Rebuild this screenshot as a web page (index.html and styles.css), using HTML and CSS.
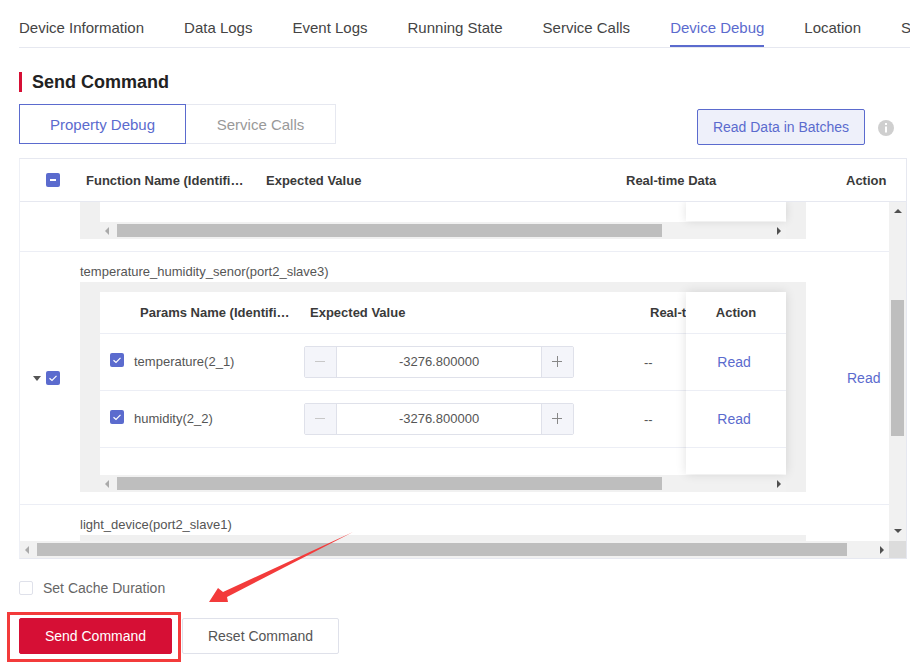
FILE: index.html
```html
<!DOCTYPE html>
<html lang="en">
<head>
    <meta charset="UTF-8">
    <title>Device Debug</title>
    <link rel="stylesheet" href="styles.css">
</head>
<body>

<div class="page">
    <div class="tabs">
        <a class="tab">Device Information</a>
        <a class="tab">Data Logs</a>
        <a class="tab">Event Logs</a>
        <a class="tab">Running State</a>
        <a class="tab">Service Calls</a>
        <a class="tab active">Device Debug</a>
        <a class="tab">Location</a>
        <a class="tab">Settings</a>
    </div>

    <h2 class="section-title">Send Command</h2>

    <div class="toolbar">
        <div class="switch">
            <span class="switch-item selected">Property Debug</span>
            <span class="switch-item">Service Calls</span>
        </div>
        <button class="batch-btn">Read Data in Batches</button>
        <svg class="info-icon" width="16" height="16" viewBox="0 0 16 16">
            <circle cx="8" cy="8" r="8" fill="#cfcfcf"/>
            <rect x="7" y="3" width="2" height="2" fill="#fff"/>
            <rect x="7" y="6.5" width="2" height="6" fill="#fff"/>
        </svg>
    </div>

    <div class="table">
        <div class="table-head">
            <div class="col-left"><span class="checkbox partial"></span></div>
            <div class="head-name">Function Name (Identifi…</div>
            <div class="head-value">Expected Value</div>
            <div class="head-data">Real-time Data</div>
            <div class="head-action">Action</div>
        </div>

        <div class="table-middle">
            <div class="table-body">
                <div class="row">
                    <div class="col-left"></div>
                    <div class="sub-block no-top">
                        <div class="sub-table">
                            <div class="sub-scroll clipped"></div>
                            <div class="sub-fixed clipped"></div>
                        </div>
                        <div class="hbar inner">
                            <span class="arrow left"></span>
                            <span class="hbar-thumb inner-thumb"></span>
                            <span class="arrow right"></span>
                        </div>
                    </div>
                </div>

                <div class="row">
                    <div class="col-left">
                        <span class="caret"></span>
                        <span class="checkbox checked">
                            <svg width="14" height="14" viewBox="0 0 14 14"><path d="M3.5 7.2 6 9.5 10.5 4.8" fill="none" stroke="#fff" stroke-width="1.2"/></svg>
                        </span>
                    </div>
                    <div class="col-device">
                        <div class="device-name">temperature_humidity_senor(port2_slave3)</div>
                        <div class="sub-block">
                            <div class="sub-table">
                                <div class="sub-scroll">
                                    <div class="sub-row sub-head">
                                        <div class="sub-name head-pad">Params Name (Identifi…</div>
                                        <div class="sub-value head-value-pad">Expected Value</div>
                                        <div class="sub-data">Real-time Data</div>
                                    </div>
                                    <div class="sub-row">
                                        <div class="sub-name param">
                                            <span class="checkbox checked">
                                                <svg width="14" height="14" viewBox="0 0 14 14"><path d="M3.5 7.2 6 9.5 10.5 4.8" fill="none" stroke="#fff" stroke-width="1.2"/></svg>
                                            </span>
                                            temperature(2_1)
                                        </div>
                                        <div class="sub-value">
                                            <div class="stepper">
                                                <span class="step minus"></span>
                                                <span class="step-input">-3276.800000</span>
                                                <span class="step plus"></span>
                                            </div>
                                        </div>
                                        <div class="sub-data dash">--</div>
                                    </div>
                                    <div class="sub-row">
                                        <div class="sub-name param">
                                            <span class="checkbox checked">
                                                <svg width="14" height="14" viewBox="0 0 14 14"><path d="M3.5 7.2 6 9.5 10.5 4.8" fill="none" stroke="#fff" stroke-width="1.2"/></svg>
                                            </span>
                                            humidity(2_2)
                                        </div>
                                        <div class="sub-value">
                                            <div class="stepper">
                                                <span class="step minus"></span>
                                                <span class="step-input">-3276.800000</span>
                                                <span class="step plus"></span>
                                            </div>
                                        </div>
                                        <div class="sub-data dash">--</div>
                                    </div>
                                </div>
                                <div class="sub-fixed">
                                    <div class="fixed-cell fixed-head">Action</div>
                                    <div class="fixed-cell"><a class="link">Read</a></div>
                                    <div class="fixed-cell"><a class="link">Read</a></div>
                                </div>
                            </div>
                            <div class="hbar inner">
                                <span class="arrow left"></span>
                                <span class="hbar-thumb inner-thumb"></span>
                                <span class="arrow right"></span>
                            </div>
                        </div>
                    </div>
                    <div class="col-action"><a class="link">Read</a></div>
                </div>

                <div class="row">
                    <div class="col-left"></div>
                    <div class="col-device">
                        <div class="device-name">light_device(port2_slave1)</div>
                        <div class="sub-block tall"></div>
                    </div>
                </div>
            </div>

            <div class="vbar">
                <span class="arrow up"></span>
                <span class="vbar-track"><span class="vbar-thumb"></span></span>
                <span class="arrow down"></span>
            </div>
        </div>

        <div class="table-foot">
            <div class="hbar outer">
                <span class="arrow left"></span>
                <span class="hbar-thumb outer-thumb"></span>
                <span class="arrow right"></span>
            </div>
            <div class="corner"></div>
        </div>
    </div>

    <label class="cache"><span class="checkbox empty"></span>Set Cache Duration</label>

    <div class="actions">
        <button class="btn primary">Send Command</button>
        <button class="btn">Reset Command</button>
    </div>
</div>

<!-- red annotations drawn on top of the screenshot -->
<div class="mark-box"></div>
<svg class="mark-arrow" width="910" height="672" viewBox="0 0 910 672">
    <polygon points="353,532 223,592 218,588 209,602 228,602 227,597" fill="#f33b3b"/>
</svg>

</body>
</html>
```

FILE: styles.css
```css
* {
    box-sizing: border-box;
}
html, body {
    margin: 0;
    height: 672px;
    overflow: hidden;
    background-color: #fff;
}
body {
    position: relative;
    font-family: 'Liberation Sans', Arial, sans-serif;
    font-size: 14px;
    color: #555;
}
.page {
    padding-left: 19px;
}

/* top tabs */
.tabs {
    display: flex;
    gap: 40px;
    height: 48px;
    border-bottom: 1px solid #e6e8f0;
    white-space: nowrap;
    overflow: hidden;
}
.tab {
    height: 48px;
    padding-top: 19px;
    font-size: 15px;
    line-height: 18px;
    color: #444;
    flex: none;
}
.tab.active {
    color: #5b6bce;
    border-bottom: 2px solid #5b6bce;
    height: 47px;
}
.section-title {
    margin: 24px 0 12px;
    height: 20px;
    border-left: 3px solid #d60f35;
    padding-left: 10px;
    font-size: 18px;
    line-height: 20px;
    font-weight: bold;
    color: #222;
}

/* switch + batch button */
.toolbar {
    display: flex;
    align-items: flex-end;
    height: 41px;
    padding-right: 16px;
}
.switch {
    display: flex;
    align-self: flex-start;
}
.switch-item {
    width: 150px;
    height: 40px;
    border: 1px solid #e6e8f0;
    border-left: none;
    line-height: 40px;
    text-align: center;
    font-size: 15px;
    color: #999;
}
.switch-item.selected {
    width: 167px;
    border: 1px solid #5b6bce;
    color: #5b6bce;
}
.batch-btn {
    width: 168px;
    height: 36px;
    margin-left: auto;
    padding: 0;
    border: 1px solid #5b6bce;
    border-radius: 2px;
    background-color: #eef0fa;
    color: #5b6bce;
    font-family: inherit;
    font-size: 14px;
}
.info-icon {
    margin-left: 13px;
    margin-bottom: 9px;
}

/* outer table */
.table {
    width: 888px;
    margin-top: 13px;
    border: 1px solid #e6e8f0;
    border-left-color: #eef0f6;
}
.table-head {
    display: flex;
    align-items: center;
    height: 43px;
    border-bottom: 1px solid #e6e8f0;
    font-weight: bold;
    font-size: 13px;
    color: #3a3a3a;
    white-space: nowrap;
}
.col-left {
    flex: none;
    width: 60px;
    padding-right: 20px;
    display: flex;
    align-items: center;
    justify-content: flex-end;
}
.head-name {
    width: 186px;
    padding-left: 6px;
}
.head-value {
    width: 360px;
}
.head-data {
    width: 220px;
}
.table-middle {
    display: flex;
    height: 339px;
}
.table-body {
    width: 869px;
    overflow: hidden;
}
.row {
    display: flex;
    border-bottom: 1px solid #eceef5;
}
.col-left .caret {
    margin-right: 5px;
}
.col-device {
    width: 726px;
}
.col-action {
    align-self: center;
    margin-left: 41px;
}
.device-name {
    height: 30px;
    padding-top: 11px;
    font-size: 13px;
    line-height: 17px;
    color: #555;
}

/* nested table */
.sub-block {
    width: 726px;
    margin-bottom: 12px;
    background-color: #f0f0f0;
    padding: 10px 20px 0;
}
.sub-block.no-top {
    padding-top: 0;
}
.sub-block.tall {
    height: 60px;
}
.sub-table {
    display: flex;
    background-color: #fff;
}
.sub-scroll {
    width: 586px;
    height: 183px;
    overflow: hidden;
}
.sub-scroll.clipped {
    height: 20px;
}
.sub-fixed {
    flex: none;
    width: 100px;
    height: 182px;
    background-color: #fff;
    box-shadow: 0 0 10px rgba(0, 0, 0, 0.12);
    position: relative;
}
.sub-fixed.clipped {
    height: 19px;
}
.sub-row {
    display: flex;
    align-items: center;
    width: 720px;
    height: 57px;
    border-bottom: 1px solid #eceef5;
    font-size: 13px;
    white-space: nowrap;
}
.sub-head {
    height: 42px;
    font-weight: bold;
    color: #3a3a3a;
}
.sub-name {
    display: flex;
    align-items: center;
    gap: 10px;
    width: 204px;
    padding-left: 10px;
}
.sub-name.param {
    padding-bottom: 2px;
}
.sub-name.param .checkbox {
    margin-bottom: 2px;
}
.head-pad {
    padding-left: 40px;
}
.sub-value {
    width: 346px;
}
.head-value-pad {
    padding-left: 6px;
}
.sub-data.dash {
    margin-left: -6px;
}
.fixed-cell {
    height: 57px;
    line-height: 56px;
    text-align: center;
    padding-right: 4px;
    border-bottom: 1px solid #eceef5;
}
.fixed-head {
    height: 42px;
    line-height: 42px;
    padding-right: 0;
    font-size: 13px;
    font-weight: bold;
    color: #3a3a3a;
}
.link {
    color: #5b6bce;
}

/* number stepper */
.stepper {
    display: flex;
    width: 270px;
    height: 32px;
    border: 1px solid #dfe1ea;
    border-radius: 2px;
}
.step {
    flex: none;
    width: 32px;
    background-color: #f4f5fa;
    position: relative;
}
.step.minus {
    border-right: 1px solid #dfe1ea;
}
.step.plus {
    border-left: 1px solid #dfe1ea;
}
.step::before {
    content: "";
    position: absolute;
    left: 10px;
    top: 14px;
    width: 10px;
    height: 1px;
    background-color: #c8c8c8;
}
.step.plus::before {
    background-color: #888;
}
.step.plus::after {
    content: "";
    position: absolute;
    left: 15px;
    top: 9px;
    width: 1px;
    height: 11px;
    background-color: #888;
}
.step-input {
    flex: 1;
    line-height: 30px;
    text-align: center;
    font-size: 13px;
    color: #555;
}

/* checkboxes */
.checkbox {
    flex: none;
    display: inline-block;
    width: 14px;
    height: 14px;
    border-radius: 2px;
    background-color: #5b6bce;
}
.checkbox svg {
    display: block;
}
.checkbox.partial {
    position: relative;
}
.checkbox.partial::before {
    content: "";
    position: absolute;
    left: 4px;
    top: 6px;
    width: 6px;
    height: 2px;
    background-color: #fff;
}
.checkbox.empty {
    background-color: #fff;
    border: 1px solid #dfe1ea;
}
.caret {
    flex: none;
    width: 0;
    height: 0;
    border-left: 4px solid transparent;
    border-right: 4px solid transparent;
    border-top: 5px solid #555;
}

/* scrollbars */
.hbar {
    display: flex;
    align-items: center;
    height: 17px;
    background-color: #f1f1f1;
}
.hbar.outer {
    flex: 1;
    padding: 0 5px;
}
.hbar.inner {
    padding: 0 5px;
}
.hbar-thumb {
    height: 13px;
    background-color: #bebebe;
}
.inner-thumb {
    width: 545px;
    margin-left: 8px;
    margin-right: auto;
}
.outer-thumb {
    width: 810px;
    margin-left: 8px;
    margin-right: auto;
}
.arrow {
    flex: none;
    width: 0;
    height: 0;
}
.arrow.left {
    border-top: 4px solid transparent;
    border-bottom: 4px solid transparent;
    border-right: 4px solid #aaa;
}
.arrow.right {
    border-top: 4px solid transparent;
    border-bottom: 4px solid transparent;
    border-left: 4px solid #505050;
}
.arrow.up {
    border-left: 4px solid transparent;
    border-right: 4px solid transparent;
    border-bottom: 4px solid #505050;
    margin-top: 7px;
}
.arrow.down {
    border-left: 4px solid transparent;
    border-right: 4px solid transparent;
    border-top: 4px solid #505050;
    margin-bottom: 8px;
}
.vbar {
    flex: none;
    width: 17px;
    display: flex;
    flex-direction: column;
    align-items: center;
    background-color: #f1f1f1;
}
.vbar-track {
    flex: 1;
    width: 100%;
    padding: 87px 2px 0;
}
.vbar-thumb {
    display: block;
    height: 136px;
    background-color: #bebebe;
}
.table-foot {
    display: flex;
}
.corner {
    flex: none;
    width: 17px;
    background-color: #dcdcdc;
}

/* bottom */
.cache {
    display: flex;
    align-items: center;
    gap: 10px;
    margin-top: 22px;
    height: 14px;
    color: #666;
}
.actions {
    display: flex;
    gap: 10px;
    margin-top: 23px;
}
.btn {
    width: 157px;
    height: 36px;
    padding: 0;
    border: 1px solid #dfe1ea;
    border-radius: 2px;
    background-color: #fff;
    color: #555;
    font-family: inherit;
    font-size: 14px;
}
.btn.primary {
    width: 153px;
    border-color: #d60f35;
    background-color: #d60f35;
    color: #fff;
}

/* annotations over the page */
.mark-box {
    position: absolute;
    left: 7px;
    top: 612px;
    width: 174px;
    height: 50px;
    border: 3px solid #f33b3b;
}
.mark-arrow {
    position: absolute;
    left: 0;
    top: 0;
    pointer-events: none;
}
```
